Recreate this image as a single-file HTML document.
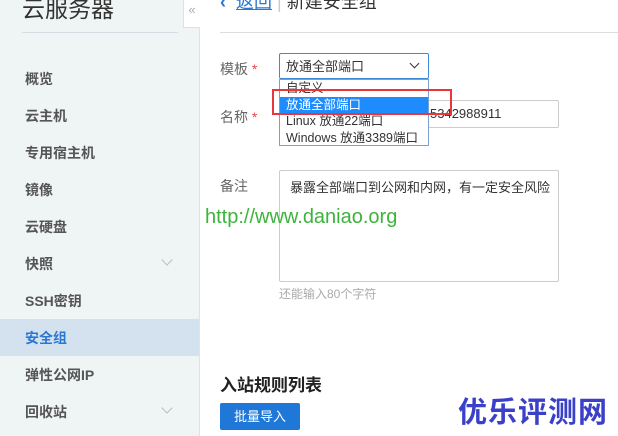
<!DOCTYPE html>
<html><head><meta charset="utf-8"><style>
*{margin:0;padding:0;box-sizing:border-box}
body{width:618px;height:436px;overflow:hidden;background:#fff;position:relative;font-family:"Liberation Sans","Noto Sans CJK SC",sans-serif;color:#333}
.a{position:absolute;white-space:nowrap}
#side{position:absolute;left:0;top:0;width:200px;height:436px;background:#eff4f5;border-right:1px solid #dde4e8}
.mi{position:absolute;left:25px;font-size:14px;font-weight:bold;color:#555;line-height:16px}
.chev{position:absolute;left:163px;width:8px;height:8px;border-right:1px solid #bbb;border-bottom:1px solid #bbb;transform:rotate(45deg)}
</style></head><body>
<div id="side">
 <div class="a" style="left:22px;top:-10px;font-size:23px;color:#333">云服务器</div>
 <div class="a" style="left:22px;top:32px;width:156px;height:1px;background:#d5dde2"></div>
 <div class="mi" style="top:71px">概览</div>
 <div class="mi" style="top:108px">云主机</div>
 <div class="mi" style="top:145px">专用宿主机</div>
 <div class="mi" style="top:182px">镜像</div>
 <div class="mi" style="top:219px">云硬盘</div>
 <div class="mi" style="top:256px">快照</div><div class="chev" style="top:256px"></div>
 <div class="mi" style="top:293px">SSH密钥</div>
 <div class="a" style="left:0;top:319px;width:199px;height:37px;background:#d4e2ef"></div>
 <div class="mi" style="top:330px;color:#2a78d0">安全组</div>
 <div class="mi" style="top:367px">弹性公网IP</div>
 <div class="mi" style="top:404px">回收站</div><div class="chev" style="top:404px"></div>
</div>
<div class="a" style="left:183px;top:0;width:17px;height:28px;background:#fff;border:1px solid #d8e2e8;border-top:none;border-right:none;font-size:13px;color:#aaa;text-align:center;line-height:20px">«</div>
<div class="a" style="left:220px;top:-12px;font-size:18px;color:#2a78d0"><b>‹</b> &nbsp;<span style="text-decoration:underline">返回</span> <span style="color:#ccc">|</span> <span style="color:#333">新建安全组</span></div>
<div class="a" style="left:220px;top:32px;width:398px;height:1px;background:#ddd"></div>

<div class="a" style="left:220px;top:59px;font-size:14px;color:#666">模板 <span style="color:#e44">*</span></div>
<div class="a" style="left:279px;top:53px;width:150px;height:26px;border:1px solid #3c8ad8;border-radius:2px;font-size:13px;line-height:26px;padding-left:6px;color:#333">放通全部端口<span style="position:absolute;right:10px;top:6px;width:7px;height:7px;border-right:1.5px solid #333;border-bottom:1.5px solid #333;transform:rotate(45deg)"></span></div>
<div class="a" style="left:220px;top:107px;font-size:14px;color:#666">名称 <span style="color:#e44">*</span></div>
<div class="a" style="left:279px;top:100px;width:280px;height:28px;border:1px solid #ccc;border-radius:2px;font-size:13px;line-height:26px;padding-left:150px;color:#333">5342988911</div>
<div class="a" style="left:279px;top:79px;width:150px;height:67px;border:1px solid #7aa0cc;background:#fff;font-size:12.5px;line-height:16.5px;overflow:hidden">
 <div style="margin-top:0px;padding-left:6px">自定义</div>
 <div style="background:#1e8cff;color:#fff;padding-left:6px">放通全部端口</div>
 <div style="padding-left:6px">Linux 放通22端口</div>
 <div style="padding-left:6px">Windows 放通3389端口</div>
</div>
<div class="a" style="left:272px;top:89px;width:180px;height:26px;border:2px solid #e8373a"></div>

<div class="a" style="left:220px;top:176px;font-size:14px;color:#666">备注</div>
<div class="a" style="left:279px;top:170px;width:280px;height:112px;border:1px solid #ccc;border-radius:2px"></div>
<div class="a" style="left:290px;top:177px;font-size:13px;color:#333">暴露全部端口到公网和内网，有一定安全风险</div>
<div class="a" style="left:279px;top:285px;font-size:12px;color:#aaa">还能输入80个字符</div>
<div class="a" style="left:205px;top:206px;font-size:20px;color:#3cb43c;font-family:'Liberation Sans',sans-serif">http://www.daniao.org</div>

<div class="a" style="left:220px;top:371px;font-size:17px;font-weight:bold;color:#222">入站规则列表</div>
<div class="a" style="left:220px;top:403px;width:80px;height:27px;background:#1f78d8;border-radius:2px;color:#fff;font-size:13px;text-align:center;line-height:27px">批量导入</div>
<div class="a" style="left:458px;top:389px;font-size:29px;font-weight:bold;color:#3b40c8;letter-spacing:1px">优乐评测网</div>
</body></html>
